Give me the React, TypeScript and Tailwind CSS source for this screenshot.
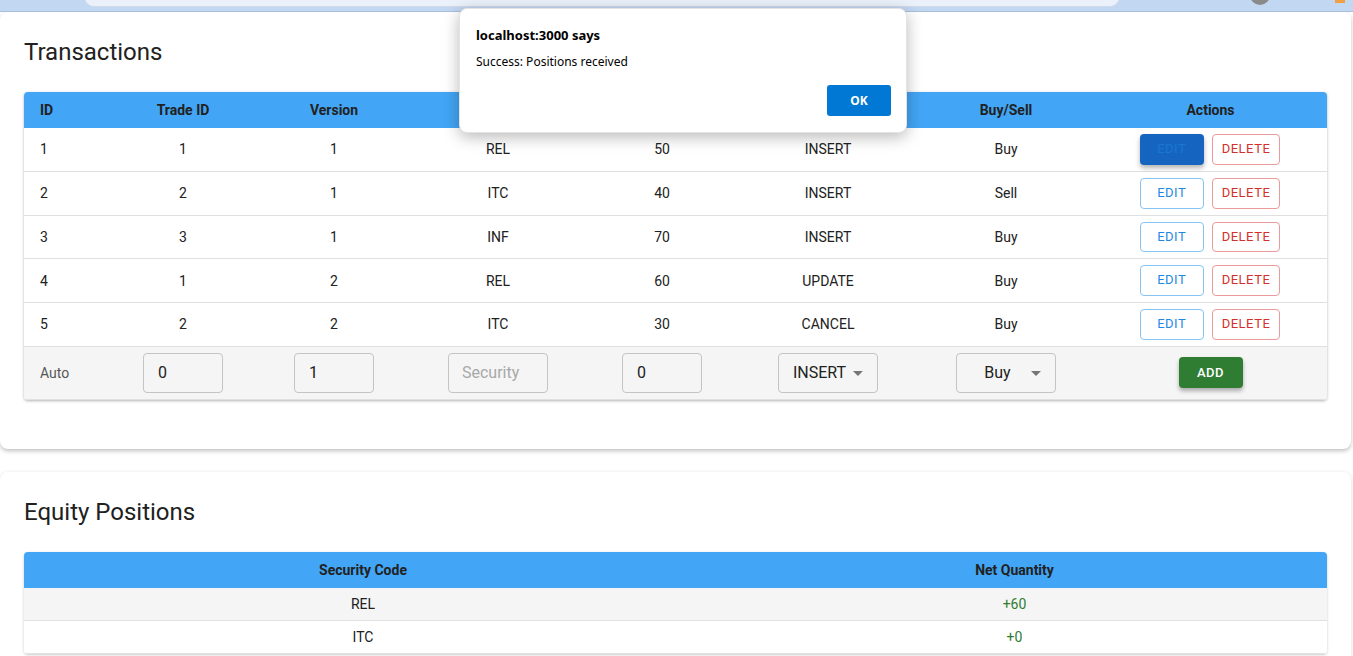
import React from 'react';

const rows = [
  { id: 1, tradeId: 1, version: 1, security: 'REL', qty: 50, action: 'INSERT', side: 'Buy' },
  { id: 2, tradeId: 2, version: 1, security: 'ITC', qty: 40, action: 'INSERT', side: 'Sell' },
  { id: 3, tradeId: 3, version: 1, security: 'INF', qty: 70, action: 'INSERT', side: 'Buy' },
  { id: 4, tradeId: 1, version: 2, security: 'REL', qty: 60, action: 'UPDATE', side: 'Buy' },
  { id: 5, tradeId: 2, version: 2, security: 'ITC', qty: 30, action: 'CANCEL', side: 'Buy' },
];

const positions = [
  { code: 'REL', net: '+60' },
  { code: 'ITC', net: '+0' },
];

const cols = 'grid grid-cols-[84px_150px_152px_176px_152px_180px_176px_233px]';

const ArrowDrop = () => (
  <svg viewBox="0 0 24 24" className="w-6 h-6 fill-[#757575]">
    <path d="M7 10l5 5 5-5z" />
  </svg>
);

const BrowserStrip = () => (
  <div className="relative h-[12px] bg-[#c2d7f2] border-b border-[#a9bedb] overflow-hidden">
    <div className="absolute left-[84px] top-[-13px] w-[1036px] h-[20px] rounded-full bg-[#eaf1fb] border border-[#d0dbe8]" />
    <div className="absolute left-[1250px] top-[-15px] w-[20px] h-[20px] rounded-full bg-[#8a8a8a]" />
    <div className="absolute left-[1335px] top-[-5px] w-[10px] h-[8px] bg-[#f0a040]" />
  </div>
);

const AlertDialog = () => (
  <div
    className="absolute left-[459px] top-[8px] w-[448px] h-[125px] bg-white rounded-lg shadow-[0_4px_16px_rgba(0,0,0,0.28)] border border-[#e3e3e3] px-4 pt-[17px]"
    style={{ fontFamily: '"Noto Sans", "DejaVu Sans", sans-serif' }}
  >
    <p className="text-[13px] font-bold text-black leading-[18px]">localhost:3000 says</p>
    <p className="text-[12px] text-black leading-[16px] mt-[10px]">Success: Positions received</p>
    <div className="flex justify-end mt-[15px] -mr-[1px]">
      <button className="w-[64px] h-[31px] bg-[#0078d4] text-white text-[12px] font-bold rounded-[3px]">OK</button>
    </div>
  </div>
);

const Transactions = () => (
  <div className="bg-white rounded-lg shadow-[0_2px_4px_rgba(0,0,0,0.25)] w-[1351px] px-6 pt-6 pb-[49px]">
    <h2 className="text-2xl leading-8 text-[#212121]">Transactions</h2>
    <div className="mt-6 rounded shadow-[0_1px_3px_rgba(0,0,0,0.3)] overflow-hidden text-sm text-[#212121]">
      <div className={`${cols} h-9 items-center bg-[#42a5f5] font-bold`}>
        <div className="pl-4">ID</div>
        <div className="text-center">Trade ID</div>
        <div className="text-center">Version</div>
        <div className="text-center">Security</div>
        <div className="text-center">Quantity</div>
        <div className="text-center">Action</div>
        <div className="text-center">Buy/Sell</div>
        <div className="text-center">Actions</div>
      </div>
      {rows.map((r, i) => (
        <div key={r.id} className={`${cols} items-center py-1.5 bg-white border-b border-[#e0e0e0]`}>
          <div className="pl-4">{r.id}</div>
          <div className="text-center">{r.tradeId}</div>
          <div className="text-center">{r.version}</div>
          <div className="text-center">{r.security}</div>
          <div className="text-center">{r.qty}</div>
          <div className="text-center">{r.action}</div>
          <div className="text-center">{r.side}</div>
          <div className="flex justify-center gap-2 pr-[1px]">
            {i === 0 ? (
              <button className="min-w-[64px] h-[30.75px] px-[9px] rounded bg-[#1565c0] text-[#1976d2] text-[13px] tracking-[0.5px] shadow-[0_3px_5px_rgba(0,0,0,0.3)]">
                EDIT
              </button>
            ) : (
              <button className="min-w-[64px] h-[30.75px] px-[9px] rounded border border-[#88c4f3] text-[#1e88e5] text-[13px] tracking-[0.5px]">
                EDIT
              </button>
            )}
            <button className="min-w-[64px] h-[30.75px] px-[9px] rounded border border-[#ea9a9a] text-[#d32f2f] text-[13px] tracking-[0.5px]">
              DELETE
            </button>
          </div>
        </div>
      ))}
      <div className={`${cols} items-center py-1.5 bg-[#f5f5f5] border-b border-[#e0e0e0] text-base`}>
        <div className="pl-4 text-sm text-[#555]">Auto</div>
        <div className="flex justify-center">
          <div className="w-[80px] h-10 rounded border border-[#c4c4c4] flex items-center px-[14px]">0</div>
        </div>
        <div className="flex justify-center">
          <div className="w-[80px] h-10 rounded border border-[#c4c4c4] flex items-center px-[14px]">1</div>
        </div>
        <div className="flex justify-center">
          <div className="w-[100px] h-10 rounded border border-[#c4c4c4] flex items-center px-[13px] text-[#a8a8a8]">Security</div>
        </div>
        <div className="flex justify-center">
          <div className="w-[80px] h-10 rounded border border-[#c4c4c4] flex items-center px-[14px]">0</div>
        </div>
        <div className="flex justify-center">
          <div className="w-[100px] h-10 rounded border border-[#c4c4c4] flex items-center pl-[14px] pr-[7px]">
            <span className="flex-1">INSERT</span>
            <ArrowDrop />
          </div>
        </div>
        <div className="flex justify-center">
          <div className="w-[100px] h-10 rounded border border-[#c4c4c4] flex items-center pl-[14px] pr-[7px]">
            <span className="flex-1 text-center">Buy</span>
            <ArrowDrop />
          </div>
        </div>
        <div className="flex justify-center">
          <button className="w-[64px] h-[30.75px] rounded bg-[#2e7d32] text-white text-[13px] font-medium tracking-[0.4px] shadow-[0_3px_4px_rgba(0,0,0,0.3)]">
            ADD
          </button>
        </div>
      </div>
    </div>
  </div>
);

const Positions = () => (
  <div className="bg-white rounded-lg shadow-[0_1px_4px_rgba(0,0,0,0.15)] w-[1351px] px-6 pt-6 pb-10">
    <h2 className="text-2xl leading-8 text-[#212121]">Equity Positions</h2>
    <div className="mt-6 rounded overflow-hidden text-sm text-[#212121] shadow-[0_1px_3px_rgba(0,0,0,0.2)]">
      <div className="grid grid-cols-[678px_625px] h-9 items-center bg-[#42a5f5] font-bold text-center">
        <div>Security Code</div>
        <div>Net Quantity</div>
      </div>
      {positions.map((p, i) => (
        <div
          key={p.code}
          className={`grid grid-cols-[678px_625px] py-1.5 leading-5 text-center border-b border-[#e0e0e0] ${i % 2 === 0 ? 'bg-[#f5f5f5]' : 'bg-white'}`}
        >
          <div>{p.code}</div>
          <div className="text-[#2e7d32]">{p.net}</div>
        </div>
      ))}
    </div>
  </div>
);

export default function App() {
  return (
    <div className="relative h-[656px] overflow-hidden bg-white" style={{ fontFamily: 'Roboto, "Liberation Sans", sans-serif' }}>
      <BrowserStrip />
      <div className="flex flex-col gap-[23px]">
        <Transactions />
        <Positions />
      </div>
      <AlertDialog />
    </div>
  );
}
